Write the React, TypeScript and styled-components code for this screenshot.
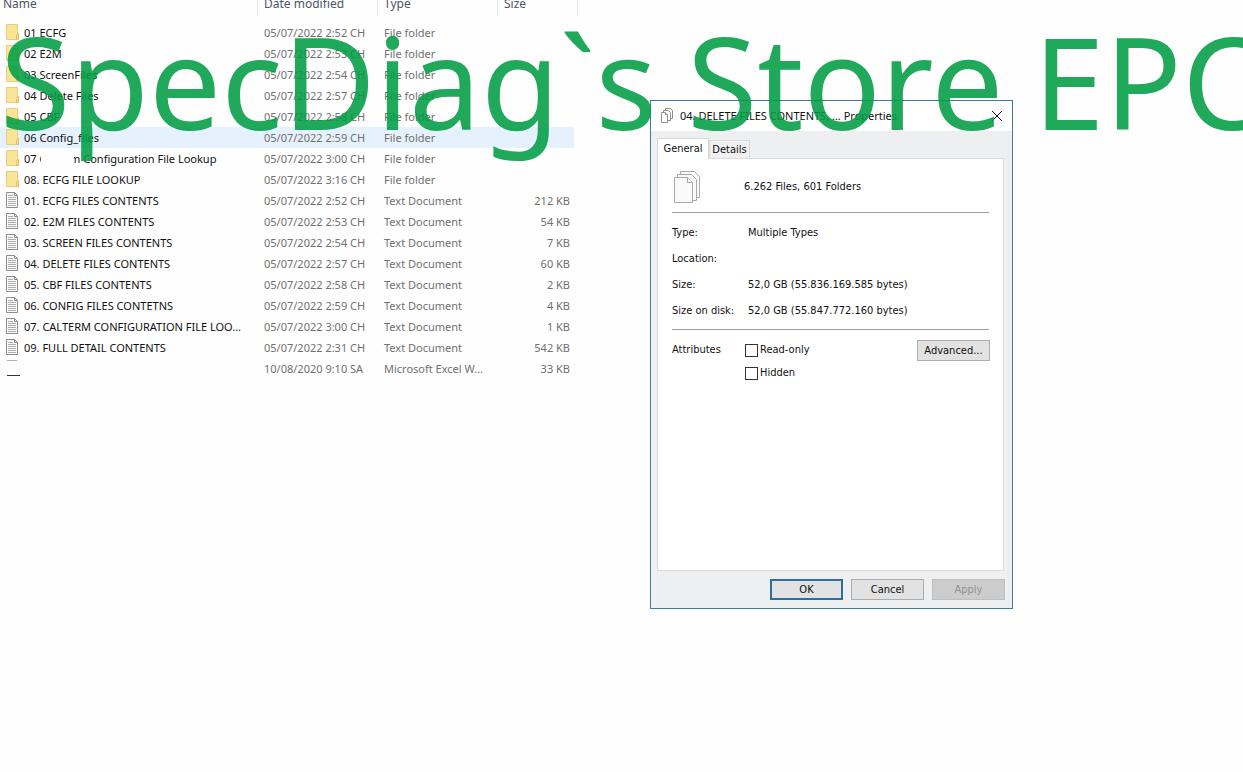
import React from 'react';
import styled, { createGlobalStyle } from 'styled-components';

const Global = createGlobalStyle`
  * { box-sizing: border-box; }
  body { margin: 0; background: #fefefe; color: #111; font: 11px/16px "Noto Sans", "Open Sans", sans-serif; }
  table { border-collapse: separate; border-spacing: 0; }
`;

const Desktop = styled.div`
  position: relative;
  display: flex;
  align-items: flex-start;
  gap: 72px;
  min-height: 100vh;
  overflow: hidden;
`;

const FileTable = styled.table`
  flex: 0 0 578px;
  width: 578px;
  table-layout: fixed;
`;

const HeadCell = styled.th<{ $first?: boolean; $width: number }>`
  width: ${p => p.$width}px;
  padding: 0 0 6px;
  font-weight: 400;
  text-align: left;
  color: #4c5468;
  span {
    display: flex;
    align-items: flex-end;
    height: 16px;
    padding: 0 0 4px ${p => (p.$first ? 3 : 6)}px;
    border-right: 1px solid #e2e4e6;
    font-size: 12px;
  }
`;

const Row = styled.tr<{ $active?: boolean }>`
  height: 21px;
  td { background: ${p => (p.$active ? '#e5f2fd' : 'transparent')}; background-clip: padding-box; }
`;

const Cell = styled.td<{ $right?: boolean }>`
  padding: 0 4px 0 6px;
  color: #707070;
  white-space: nowrap;
  text-align: ${p => (p.$right ? 'right' : 'left')};
  border-right: ${p => (p.$right ? '4px solid transparent' : '0')};
`;

const NameBox = styled.div`
  display: flex;
  align-items: center;
  gap: 4px;
  color: #111;
  svg { flex: none; }
`;

const Smudged = styled.span`
  position: relative;
  &::after {
    content: '';
    position: absolute;
    left: 17px;
    top: 0;
    width: 33px;
    height: 16px;
    background: #fefefe;
  }
`;

const Dialog = styled.section`
  flex: 0 0 363px;
  margin-top: 100px;
  border: 1px solid #3f7c98;
  background: #eeeff0;
  padding: 0 8px 8px 6px;
  font: 11px/16px "DejaVu Sans Condensed", "Open Sans", sans-serif;
`;

const TitleBar = styled.header`
  display: flex;
  align-items: center;
  gap: 6px;
  height: 30px;
  margin: 0 -8px 0 -6px;
  padding: 0 8px 0 9px;
  background: #fff;
  font: 11px/16px "Noto Sans", "Open Sans", sans-serif;
`;

const Title = styled.h1`
  flex: 1;
  margin: 0;
  font: inherit;
`;

const CloseButton = styled.button`
  display: grid;
  place-items: center;
  width: 14px;
  height: 14px;
  padding: 0;
  border: 0;
  background: none;
`;

const Tabs = styled.div`
  display: flex;
  align-items: flex-end;
  padding-top: 7px;
`;

const Tab = styled.button<{ $selected?: boolean }>`
  height: ${p => (p.$selected ? 21 : 18)}px;
  margin-bottom: ${p => (p.$selected ? -1 : 0)}px;
  width: ${p => (p.$selected ? 52 : 41)}px;
  padding: 0;
  border: 1px solid #d9d9d9;
  border-bottom: 0;
  background: ${p => (p.$selected ? '#fff' : '#f0f0f0')};
  font: inherit;
  color: inherit;
`;

const Panel = styled.div`
  width: 347px;
  height: 413px;
  padding: 10px 14px 0 14px;
  border: 1px solid #dcdcdc;
  background: #fff;
`;

const Summary = styled.div`
  display: flex;
  align-items: center;
  gap: 42px;
  height: 44px;
  padding: 0 0 8px 2px;
  border-bottom: 1px solid #a0a0a0;
`;

const Facts = styled.dl`
  display: grid;
  grid-template-columns: 76px 1fr;
  grid-auto-rows: 16px;
  row-gap: 10px;
  margin: 0;
  padding: 12px 0 10px;
  border-bottom: 1px solid #a0a0a0;
  dt, dd { margin: 0; white-space: nowrap; }
`;

const Attributes = styled.div`
  display: grid;
  grid-template-columns: 73px 1fr 73px;
  align-items: start;
  padding-top: 10px;
  margin-right: -1px;
`;

const AttributesLabel = styled.span`
  padding-top: 2px;
`;

const Checks = styled.div`
  display: grid;
  gap: 7px;
  padding-top: 2px;
`;

const Check = styled.label`
  display: flex;
  align-items: center;
  gap: 2px;
  input {
    appearance: none;
    width: 13px;
    height: 13px;
    margin: 0;
    border: 1px solid #333;
    background: #fff;
  }
`;

const Button = styled.button<{ $primary?: boolean }>`
  width: 73px;
  height: 21px;
  padding: 0;
  border: ${p => (p.$primary ? '2px solid #2c6f9e' : '1px solid #adadad')};
  background: #e2e2e2;
  color: #111;
  font: inherit;
  &:disabled { background: #cccccc; border-color: #bfbfbf; color: #929292; }
`;

const Footer = styled.footer`
  display: flex;
  justify-content: flex-end;
  gap: 8px;
  padding-top: 8px;
  margin-right: -1px;
`;

const Watermark = styled.div`
  position: absolute;
  left: 0;
  top: 0;
  display: flex;
  gap: 30px;
  pointer-events: none;
  color: #009d43;
  opacity: 0.87;
  font: 128px/162px "Noto Sans", "Open Sans", sans-serif;
  white-space: nowrap;
`;

const FolderIcon = () => (
  <svg width="14" height="18" viewBox="0 0 14 18" aria-hidden="true">
    <path d="M.5 .5h11v9h1v6H.5z" fill="#fae596" stroke="#e6cd7e" />
    <path d="M10.500 15.500v-4l1-2h1v6z" fill="#f6dd80" stroke="#e0c46c" />
  </svg>
);

const TextIcon = () => (
  <svg width="14" height="18" viewBox="0 0 14 18" aria-hidden="true">
    <path d="M.5 .5h8l3 3v12H.5z" fill="#fafafa" stroke="#8c8c8c" />
    <path d="M8.500 .5v3h3" fill="none" stroke="#8c8c8c" />
    <path d="M2 3.500h5M2 5.500h8M2 7.500h8M2 9.500h8M2 11.500h8M2 13.500h8" stroke="#adadad" />
  </svg>
);

const RemnantIcon = () => (
  <svg width="14" height="18" viewBox="0 0 14 18" aria-hidden="true">
    <path d="M1 .5h10" stroke="#b0b0b0" />
    <path d="M1 15.500h13" stroke="#333" />
  </svg>
);

const StackIcon = () => (
  <svg width="28" height="34" viewBox="0 0 28 34" aria-hidden="true">
    <g fill="#fafafa" stroke="#aaa">
      <path d="M6.500 1.500h14l5 5v21h-19z" />
      <path d="M3.500 4.500h14l5 5v21h-19z" />
      <path d="M.5 7.500h13l5 5v20H.5z" />
      <path d="M13.500 7.500v5h5" />
    </g>
  </svg>
);

const SmallStackIcon = () => (
  <svg width="14" height="16" viewBox="0 0 14 16" aria-hidden="true">
    <g fill="#fff" stroke="#8f8f8f">
      <path d="M5.500.5h5l2 2v8h-7z" />
      <path d="M3.500 2.500h5l2 2v8h-7z" />
      <path d="M1.500 4.500h4l2 2v8h-6z" />
      <path d="M5.500 4.500v2h2" />
    </g>
  </svg>
);

type Kind = 'folder' | 'text' | 'none';
type FileRow = [Kind, string, string, string, string];
const D = '05/07/2022 ';
const files: FileRow[] = [
  ['folder', '01 ECFG', D + '2:52 CH', 'File folder', ''],
  ['folder', '02 E2M', D + '2:53 CH', 'File folder', ''],
  ['folder', '03 ScreenFiles', D + '2:54 CH', 'File folder', ''],
  ['folder', '04 Delete Files', D + '2:57 CH', 'File folder', ''],
  ['folder', '05 CBF', D + '2:58 CH', 'File folder', ''],
  ['folder', '06 Config_files', D + '2:59 CH', 'File folder', ''],
  ['folder', '07 Calterm Configuration File Lookup', D + '3:00 CH', 'File folder', ''],
  ['folder', '08. ECFG FILE LOOKUP', D + '3:16 CH', 'File folder', ''],
  ['text', '01. ECFG FILES CONTENTS', D + '2:52 CH', 'Text Document', '212 KB'],
  ['text', '02. E2M FILES CONTENTS', D + '2:53 CH', 'Text Document', '54 KB'],
  ['text', '03. SCREEN FILES CONTENTS', D + '2:54 CH', 'Text Document', '7 KB'],
  ['text', '04. DELETE FILES CONTENTS', D + '2:57 CH', 'Text Document', '60 KB'],
  ['text', '05. CBF FILES CONTENTS', D + '2:58 CH', 'Text Document', '2 KB'],
  ['text', '06. CONFIG FILES CONTETNS', D + '2:59 CH', 'Text Document', '4 KB'],
  ['text', '07. CALTERM CONFIGURATION FILE LOO...', D + '3:00 CH', 'Text Document', '1 KB'],
  ['text', '09. FULL DETAIL CONTENTS', D + '2:31 CH', 'Text Document', '542 KB'],
  ['none', '', '10/08/2020 9:10 SA', 'Microsoft Excel W...', '33 KB'],
];

const icons = { folder: FolderIcon, text: TextIcon, none: RemnantIcon };

export default function App() {
  return (
    <Desktop>
      <Global />
      <FileTable>
        <thead>
          <tr>
            <HeadCell $width={258} $first><span>Name</span></HeadCell>
            <HeadCell $width={120}><span>Date modified</span></HeadCell>
            <HeadCell $width={120}><span>Type</span></HeadCell>
            <HeadCell $width={80}><span>Size</span></HeadCell>
          </tr>
        </thead>
        <tbody>
          {files.map(([kind, name, date, type, size]) => {
            const Icon = icons[kind];
            return (
              <Row key={name} $active={name.startsWith('06 ')}>
                <Cell>
                  <NameBox>
                    <Icon />
                    {name.startsWith('07 ') ? <Smudged>{name}</Smudged> : <span>{name}</span>}
                  </NameBox>
                </Cell>
                <Cell>{date}</Cell>
                <Cell>{type}</Cell>
                <Cell $right>{size}</Cell>
              </Row>
            );
          })}
        </tbody>
      </FileTable>

      <Dialog>
        <TitleBar>
          <SmallStackIcon />
          <Title>04. DELETE FILES CONTENTS, ... Properties</Title>
          <CloseButton aria-label="Close">
            <svg width="12" height="12" viewBox="0 0 12 12"><path d="M1 1l10 10M11 1L1 11" stroke="#111" fill="none" /></svg>
          </CloseButton>
        </TitleBar>
        <Tabs role="tablist">
          <Tab role="tab" aria-selected="true" $selected>General</Tab>
          <Tab role="tab" aria-selected="false">Details</Tab>
        </Tabs>
        <Panel role="tabpanel">
          <Summary>
            <StackIcon />
            <span>6.262 Files, 601 Folders</span>
          </Summary>
          <Facts>
            <dt>Type:</dt><dd>Multiple Types</dd>
            <dt>Location:</dt><dd />
            <dt>Size:</dt><dd>52,0 GB (55.836.169.585 bytes)</dd>
            <dt>Size on disk:</dt><dd>52,0 GB (55.847.772.160 bytes)</dd>
          </Facts>
          <Attributes>
            <AttributesLabel>Attributes</AttributesLabel>
            <Checks>
              <Check><input type="checkbox" />Read-only</Check>
              <Check><input type="checkbox" />Hidden</Check>
            </Checks>
            <Button>Advanced...</Button>
          </Attributes>
        </Panel>
        <Footer>
          <Button $primary>OK</Button>
          <Button>Cancel</Button>
          <Button disabled>Apply</Button>
        </Footer>
      </Dialog>

      <Watermark>
        <span>SpecDiag`s</span> <span>Store</span> <span>EPC</span>
      </Watermark>
    </Desktop>
  );
}
